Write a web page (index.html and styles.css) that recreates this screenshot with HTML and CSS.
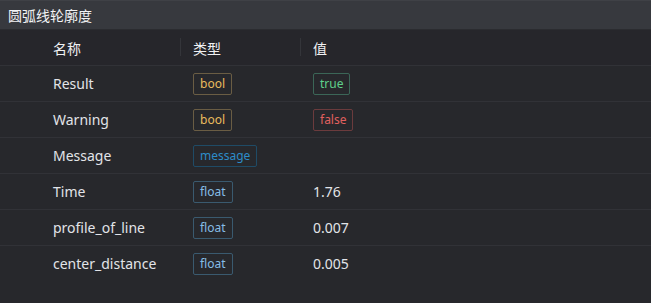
FILE: index.html
```html
<!DOCTYPE html>
<html lang="zh">
<head>
<meta charset="utf-8">
<title>圆弧线轮廓度</title>
<link rel="stylesheet" href="styles.css">
</head>
<body>
<div class="panel">
  <div class="title">圆弧线轮廓度</div>
  <table class="grid">
    <colgroup>
      <col class="c0"><col class="c1"><col class="c2"><col class="c3">
    </colgroup>
    <thead>
      <tr>
        <th></th>
        <th>名称</th>
        <th class="sep">类型</th>
        <th class="sep">值</th>
      </tr>
    </thead>
    <tbody>
      <tr><td></td><td>Result</td><td><span class="tag bool">bool</span></td><td><span class="tag ok">true</span></td></tr>
      <tr><td></td><td>Warning</td><td><span class="tag bool">bool</span></td><td><span class="tag bad">false</span></td></tr>
      <tr><td></td><td>Message</td><td><span class="tag msg">message</span></td><td></td></tr>
      <tr><td></td><td>Time</td><td><span class="tag flt">float</span></td><td>1.76</td></tr>
      <tr><td></td><td>profile_of_line</td><td><span class="tag flt">float</span></td><td>0.007</td></tr>
      <tr class="last"><td></td><td>center_distance</td><td><span class="tag flt">float</span></td><td>0.005</td></tr>
    </tbody>
  </table>
</div>
</body>
</html>
```
FILE: styles.css
```css
html, body {
  margin: 0;
  padding: 0;
  background: #27282c;
}
body {
  width: 651px;
  height: 303px;
  overflow: hidden;
  font-family: "Noto Sans", "Noto Sans CJK SC", sans-serif;
  color: #e2e4e8;
}
.panel {
  display: flex;
  flex-direction: column;
}
.title {
  height: 28px;
  line-height: 28px;
  padding-left: 8px;
  font-size: 14px;
  color: #f2f3f5;
  background: #37393e;
  border-top: 1px solid #3f4146;
  border-bottom: 1px solid #2b2c30;
  font-family: "Noto Sans CJK SC", sans-serif;
}
.grid {
  width: 100%;
  border-collapse: collapse;
  table-layout: fixed;
}
.c0 { width: 40px; }
.c1 { width: 140px; }
.c2 { width: 120px; }
thead th {
  height: 35px;
  padding: 0 0 0 13px;
  text-align: left;
  font-weight: normal;
  font-size: 14px;
  color: #f0f1f3;
  background: #26262b;
  border-bottom: 1px solid #313237;
  font-family: "Noto Sans CJK SC", sans-serif;
  position: relative;
}
thead th.sep::before {
  content: "";
  position: absolute;
  left: 0;
  top: 8px;
  height: 18px;
  width: 1px;
  background: #34353a;
}
tbody td {
  height: 35px;
  padding: 0 0 0 13px;
  font-size: 14px;
  border-bottom: 1px solid #313237;
  color: #e2e4e8;
}
tbody tr.last td { border-bottom: none; }
tbody td:first-child, thead th:first-child { padding: 0; }
.tag {
  display: inline-block;
  height: 20px;
  line-height: 19px;
  padding: 0 6px;
  font-size: 12px;
  border: 1px solid;
  border-radius: 2px;
  box-sizing: content-box;
}
.bool { color: #e9bb5e; border-color: #6a5d44; }
.ok { color: #5fcf8b; border-color: #3b6657; }
.bad { color: #e0605f; border-color: #6b3b3d; }
.msg { color: #2d8cc8; border-color: #1f4b66; }
.flt { color: #86bde6; border-color: #3a5a6f; }
```
